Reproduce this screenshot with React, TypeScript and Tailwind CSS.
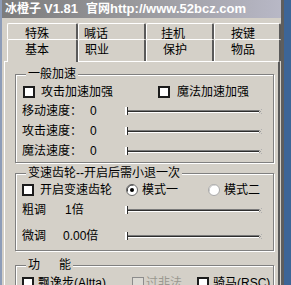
import React from 'react'

function Check({ disabled = false }: { disabled?: boolean }) {
  if (disabled) {
    return <span className="block w-[12px] h-[12px] shrink-0 border border-[#8c8c8c] bg-[#dcdad4]" />
  }
  return <span className="block w-[12px] h-[12px] shrink-0 border-2 border-[#1c1c1c] bg-white" />
}

function Radio({ checked = false }: { checked?: boolean }) {
  return (
    <svg width="12" height="12" viewBox="0 0 12 12" className="block shrink-0">
      <circle cx="6" cy="6" r="5.5" fill="#ffffff" stroke={checked ? '#6a6a6a' : '#a8a8a8'} />
      <path d="M1.5 7.5 A5 5 0 0 1 7.5 1.2" fill="none" stroke={checked ? '#404040' : '#c8c8c8'} strokeWidth="1" />
      {checked && <circle cx="6" cy="6" r="2" fill="#000000" />}
    </svg>
  )
}

function Slider() {
  return (
    <svg width="139" height="12" viewBox="0 0 139 12" className="block shrink-0">
      <rect x="2" y="5" width="133" height="1" fill="#7a7a7a" />
      <rect x="2" y="6" width="133" height="1" fill="#2e2e2e" />
      <rect x="2" y="7" width="133" height="1" fill="#ffffff" />
      <rect x="135" y="5" width="1" height="1" fill="#9a9a9a" />
      <rect x="136" y="6" width="1" height="1" fill="#9a9a9a" />
      <rect x="135" y="7" width="1" height="1" fill="#9a9a9a" />
      <rect x="137" y="4" width="1" height="1" fill="#b0b0b0" />
      <rect x="137" y="8" width="1" height="1" fill="#b0b0b0" />
      <rect x="1" y="2" width="2" height="8" fill="#ffffff" />
      <rect x="3" y="2" width="1" height="8" fill="#303030" />
    </svg>
  )
}

function SpeedRow({ label, value, cols, h = 'h-[20px]' }: { label: string; value: string; cols: string; h?: string }) {
  return (
    <div className={`grid ${cols} items-center ${h}`}>
      <span className="whitespace-nowrap">{label}</span>
      <span className="whitespace-nowrap">{value}</span>
      <Slider />
    </div>
  )
}

const groupCls =
  'ml-[10px] w-[259px] border border-[#808080] shadow-[inset_1px_1px_0_#ffffff,1px_1px_0_#ffffff] pl-[6px]'
const legendCls = 'ml-[4px] px-[2px] h-[12px] leading-[12px] bg-[#d4d0c8] whitespace-nowrap'

const tabCls =
  'h-full shrink-0 border-t border-l border-white border-r-2 border-r-[#5a5a5a] rounded-t-[2px] bg-[#d4d0c8] pt-[4px] leading-[12px] whitespace-nowrap'

export default function App() {
  return (
    <div className="w-[291px] h-[285px] overflow-hidden bg-[#3d6597] flex text-[12px] leading-[12px] text-black font-['Liberation_Sans','Noto_Sans_CJK_SC',sans-serif]">
      <div className="w-[284px] h-full shrink-0 bg-[#d4d0c8] border-l-2 border-l-[#8d9cb8] border-r-[3px] border-r-[#5e5e5e] flex flex-col">
        {/* title bar */}
        <div className="h-[18px] shrink-0 bg-gradient-to-r from-[#7c7c7c] via-[#9a9a9e] to-[#b8b8c6] flex items-center pl-[3px] text-white font-bold whitespace-nowrap">
          <span className="text-[12px]">冰橙子</span>
          <span className="text-[13px] ml-[3px]">V1.81</span>
          <span className="text-[12px] ml-[8px]">官网</span>
          <span className="text-[13px]">http://www.52bcz.com</span>
        </div>

        {/* tabs */}
        <div className="mt-[5px] ml-[5px] flex flex-col">
          <div className="flex h-[16px]">
            <div className={`${tabCls} w-[71px] pl-[17px]`}>特殊</div>
            <div className={`${tabCls} w-[68px] pl-[5px]`}>喊话</div>
            <div className={`${tabCls} w-[68px] pl-[14px]`}>挂机</div>
            <div className={`${tabCls} w-[67px] pl-[16px]`}>按键</div>
          </div>
          <div className="flex h-[22px]">
            <div className="h-[23px] w-[71px] shrink-0 relative z-10 border-t border-l border-white border-r-2 border-r-[#5a5a5a] rounded-t-[2px] bg-[#d4d0c8] pt-[4px] pl-[17px] leading-[12px]">
              基本
            </div>
            <div className={`${tabCls} w-[68px] pl-[6px]`}>职业</div>
            <div className={`${tabCls} w-[68px] pl-[16px]`}>保护</div>
            <div className={`${tabCls} w-[67px] pl-[16px]`}>物品</div>
          </div>
        </div>

        {/* panel */}
        <div className="ml-[2px] w-[276px] flex-1 border-t border-l border-white border-r-2 border-r-[#5a5a5a] flex flex-col">
          <fieldset className={`${groupCls} mt-[6px] pt-[3px] pb-[1px]`}>
            <legend className={legendCls}>一般加速</legend>
            <div className="grid grid-cols-[136px_auto] items-center h-[18px]">
              <div className="flex items-center pl-[1px]">
                <Check />
                <span className="ml-[6px] whitespace-nowrap">攻击加速加强</span>
              </div>
              <div className="flex items-center">
                <Check />
                <span className="ml-[7px] whitespace-nowrap">魔法加速加强</span>
              </div>
            </div>
            <SpeedRow label="移动速度：" value="0" cols="grid-cols-[68px_34px_139px]" />
            <SpeedRow label="攻击速度：" value="0" cols="grid-cols-[68px_34px_139px]" />
            <SpeedRow label="魔法速度：" value="0" cols="grid-cols-[68px_34px_139px]" />
          </fieldset>

          <fieldset className={`${groupCls} mt-[4px] pt-[2px] pb-[3px]`}>
            <legend className={legendCls}>变速齿轮--开启后需小退一次</legend>
            <div className="grid grid-cols-[104px_82px_auto] items-center h-[18px]">
              <div className="flex items-center">
                <Check />
                <span className="ml-[6px] whitespace-nowrap">开启变速齿轮</span>
              </div>
              <div className="flex items-center">
                <Radio checked />
                <span className="ml-[4px] whitespace-nowrap">模式一</span>
              </div>
              <div className="flex items-center">
                <Radio />
                <span className="ml-[4px] whitespace-nowrap">模式二</span>
              </div>
            </div>
            <SpeedRow label="粗调" value="1倍" cols="grid-cols-[43px_59px_139px]" h="h-[22px]" />
            <div className="mt-[4px]">
              <SpeedRow label="微调" value="0.00倍" cols="grid-cols-[41px_61px_139px]" h="h-[22px]" />
            </div>
          </fieldset>

          <fieldset className={`${groupCls} mt-[8px] pt-[6px] pb-[4px]`}>
            <legend className={legendCls}>
              功<span className="ml-[19px]">能</span>
            </legend>
            <div className="grid grid-cols-[110px_65px_auto] items-center h-[12px]">
              <div className="flex items-center">
                <Check />
                <span className="ml-[4px] whitespace-nowrap">飘逸步(Altta)</span>
              </div>
              <div className="flex items-center">
                <Check disabled />
                <span className="ml-[2px] whitespace-nowrap text-[#9a9890]">过非法</span>
              </div>
              <div className="flex items-center">
                <Check />
                <span className="ml-[4px] whitespace-nowrap">骑马(RSC)</span>
              </div>
            </div>
          </fieldset>
        </div>
      </div>
    </div>
  )
}
